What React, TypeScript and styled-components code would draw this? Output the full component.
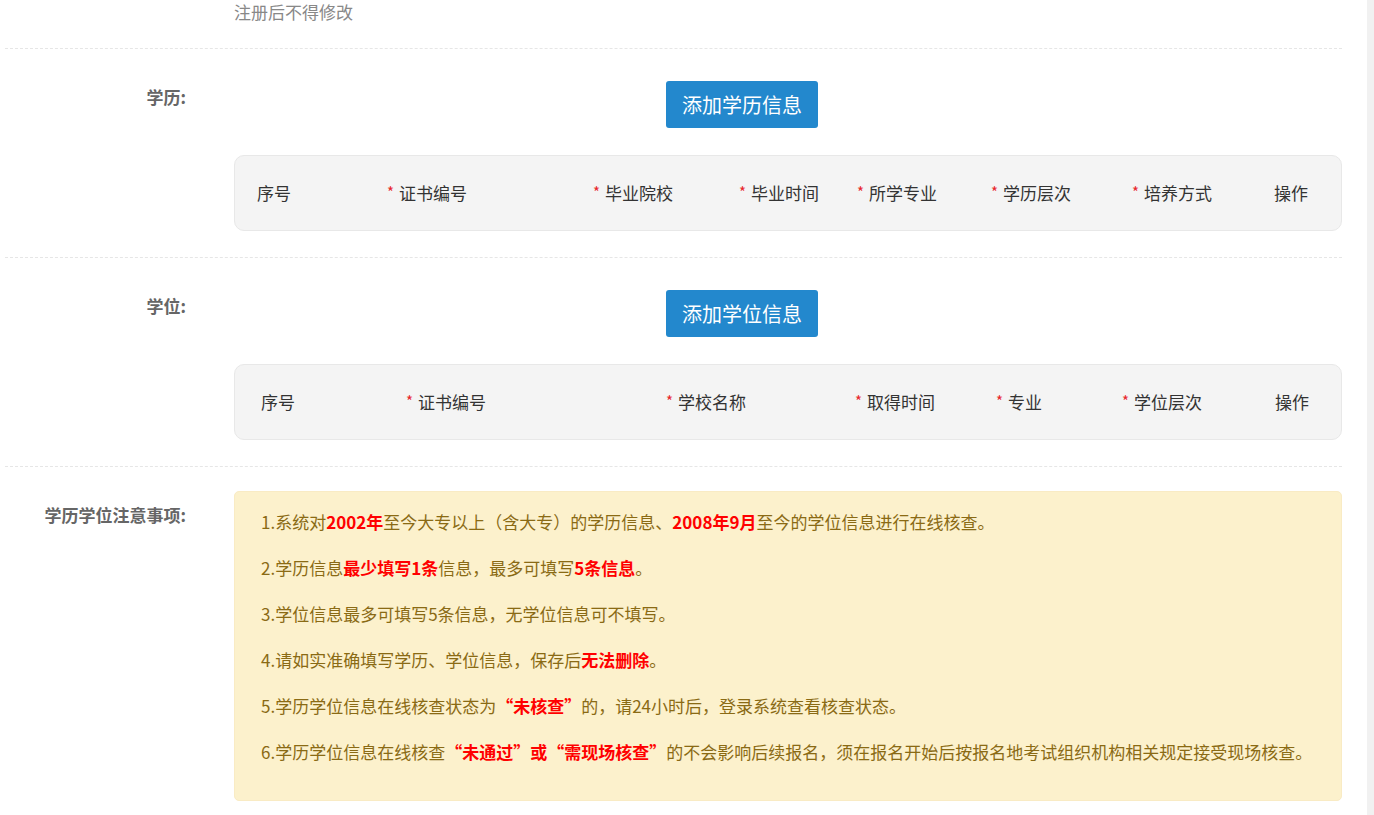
import React, { FC } from "react"
import styled, { createGlobalStyle } from "styled-components"

const GlobalStyle = createGlobalStyle`
  html, body {
    margin: 0;
    padding: 0;
    background: #fff;
    overflow: hidden;
  }
  body {
    font-family: "Noto Sans CJK SC", "Noto Sans", "Liberation Sans", sans-serif;
  }
`

const Shell = styled.div`
  display: flex;
  width: 1374px;
  height: 815px;
  overflow: hidden;
`

const Main = styled.div`
  width: 1337px;
  padding: 0 25px 0 5px;
`

const Track = styled.div`
  width: 7px;
  background: #f1f1f1;
`

const Row = styled.div<{ $top: number; $bottom: number }>`
  display: flex;
  padding: ${p => p.$top}px 0 ${p => p.$bottom}px;
  border-bottom: 1px dashed #e6e6e6;
`

const Label = styled.div<{ $offset: number }>`
  width: 181px;
  flex-shrink: 0;
  margin-top: ${p => p.$offset}px;
  text-align: right;
  font-size: 17px;
  line-height: 22px;
  font-weight: 700;
  color: #666;
`

const Content = styled.div`
  flex: 1;
  margin-left: 48px;
  display: flex;
  flex-direction: column;
`

const Hint = styled.div`
  padding-top: 1px;
  font-size: 17px;
  line-height: 22px;
  color: #888;
`

const AddButton = styled.button`
  align-self: flex-start;
  margin-left: 432px;
  width: 152px;
  height: 47px;
  border: none;
  border-radius: 3px;
  background: #2388cd;
  color: #fff;
  font-family: inherit;
  font-size: 20px;
  cursor: pointer;
`

const TableHead = styled.div<{ $cols: string; $pad: number }>`
  margin-top: 27px;
  height: 74px;
  display: grid;
  grid-template-columns: ${p => p.$cols};
  align-items: center;
  padding-left: ${p => p.$pad}px;
  background: #f4f4f4;
  border: 1px solid #e8e8e8;
  border-radius: 10px;
  font-size: 17px;
  color: #333;
`

const Cell = styled.div`
  white-space: nowrap;
  padding-bottom: 2px;
`

const Star = styled.span`
  color: #e8262b;
  font-size: 15px;
  margin-right: 5px;
  vertical-align: 2px;
`

const Notice = styled.div`
  display: flex;
  flex-direction: column;
  gap: 24px;
  padding: 19px 26px 37px;
  background: #fcf1cc;
  border: 1px solid #f9ebc4;
  border-radius: 5px;
  color: #8a6a14;
  font-size: 17px;
  line-height: 22px;
`

const Line = styled.div`
  white-space: nowrap;
`

const Em = styled.b`
  color: #ff0000;
  font-weight: 700;
`

type Col = { text: string; required?: boolean }

const eduCols: Col[] = [
  { text: "序号" },
  { text: "证书编号", required: true },
  { text: "毕业院校", required: true },
  { text: "毕业时间", required: true },
  { text: "所学专业", required: true },
  { text: "学历层次", required: true },
  { text: "培养方式", required: true },
  { text: "操作" },
]

const degreeCols: Col[] = [
  { text: "序号" },
  { text: "证书编号", required: true },
  { text: "学校名称", required: true },
  { text: "取得时间", required: true },
  { text: "专业", required: true },
  { text: "学位层次", required: true },
  { text: "操作" },
]

const Header: FC<{ cols: Col[]; widths: string; pad: number }> = ({ cols, widths, pad }) => (
  <TableHead $cols={widths} $pad={pad}>
    {cols.map(c => (
      <Cell key={c.text}>
        {c.required && <Star>*</Star>}
        {c.text}
      </Cell>
    ))}
  </TableHead>
)

const App: FC = () => (
  <Shell>
    <GlobalStyle />
    <Main>
      <Row $top={0} $bottom={25}>
        <Label $offset={0} />
        <Content>
          <Hint>注册后不得修改</Hint>
        </Content>
      </Row>

      <Row $top={32} $bottom={26}>
        <Label $offset={5}>学历:</Label>
        <Content>
          <AddButton>添加学历信息</AddButton>
          <Header
            cols={eduCols}
            widths="130px 206px 146px 118px 134px 141px 142px 1fr"
            pad={22}
          />
        </Content>
      </Row>

      <Row $top={32} $bottom={26}>
        <Label $offset={5}>学位:</Label>
        <Content>
          <AddButton>添加学位信息</AddButton>
          <Header
            cols={degreeCols}
            widths="145px 260px 189px 141px 126px 153px 1fr"
            pad={26}
          />
        </Content>
      </Row>

      <Row $top={24} $bottom={40}>
        <Label $offset={13}>学历学位注意事项:</Label>
        <Content>
          <Notice>
            <Line>
              1.系统对<Em>2002年</Em>至今大专以上（含大专）的学历信息、<Em>2008年9月</Em>至今的学位信息进行在线核查。
            </Line>
            <Line>
              2.学历信息<Em>最少填写1条</Em>信息，最多可填写<Em>5条信息</Em>。
            </Line>
            <Line>3.学位信息最多可填写5条信息，无学位信息可不填写。</Line>
            <Line>
              4.请如实准确填写学历、学位信息，保存后<Em>无法删除</Em>。
            </Line>
            <Line>
              5.学历学位信息在线核查状态为<Em>“未核查”</Em>的，请24小时后，登录系统查看核查状态。
            </Line>
            <Line>
              6.学历学位信息在线核查<Em>“未通过”或“需现场核查”</Em>的不会影响后续报名，须在报名开始后按报名地考试组织机构相关规定接受现场核查。
            </Line>
          </Notice>
        </Content>
      </Row>
    </Main>
    <Track />
  </Shell>
)

export default App
